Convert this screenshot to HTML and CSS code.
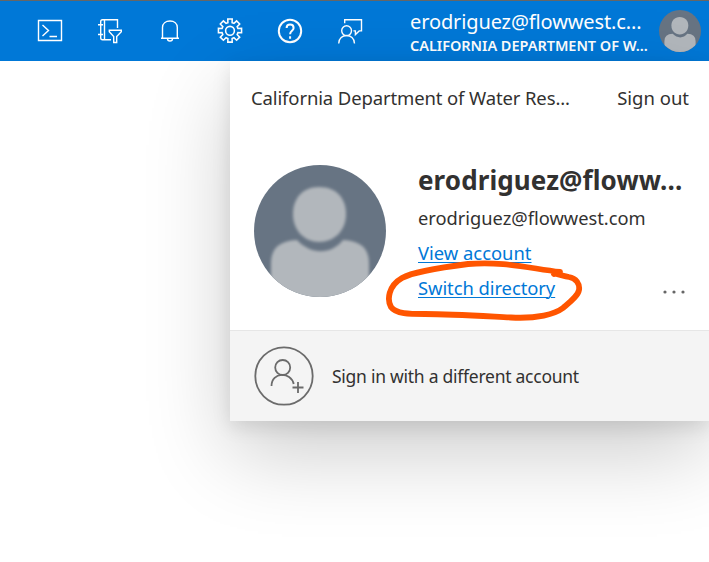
FILE: index.html
```html
<!DOCTYPE html>
<html lang="en">
<head>
<meta charset="utf-8">
<title>Account menu</title>
<link rel="stylesheet" href="styles.css">
</head>
<body>
<header class="topbar">
  <nav class="tools">
    <button class="tool" aria-label="Cloud Shell"><svg viewBox="0 0 26 26"><path d="M1.500 2.500h23v20h-23zM5.500 7l6 5.500-6 5.500M12.500 18.500h7.500"/></svg></button>
    <button class="tool" aria-label="Directories and subscriptions"><svg viewBox="0 0 26 26"><path d="M20.500 10V1.700H5.500q-1.800 0-1.800 2v16q0 2 1.800 2H14M7.500 2v19.500M1 6.700h5M1 16.500h5M12.300 12.300h12v1.500l-4.600 4.700v6h-3v-6l-4.400-4.700z"/></svg></button>
    <button class="tool" aria-label="Notifications"><svg viewBox="0 0 26 26"><path d="M5.500 20V9.500C5.500 5.300 8.800 3 13 3s7.300 2.300 7.300 6.500V20M4 20.300h18M10.500 20.500c0 3.400 5 3.400 5 0"/></svg></button>
    <button class="tool" aria-label="Settings"><svg viewBox="1.200 0.600 23.600 23.600"><path d="M11.100 4.800 11 1.500h4l-.1 3.300 1.700.7 2.400-2.300 2.800 2.800-2.300 2.400.7 1.700 3.300-.1v4l-3.300-.1-.7 1.700 2.300 2.400-2.800 2.800-2.400-2.300-1.700.7.1 3.300h-4l.1-3.300-1.700-.7L7 20.800 4.200 18l2.300-2.400-.7-1.700-3.300.1v-4l3.300.1.7-1.700L4.200 6 7 3.200l2.400 2.300z"/><circle cx="13" cy="12.200" r="4"/></svg></button>
    <button class="tool bold" aria-label="Help"><svg viewBox="0 0 26 26"><circle cx="13" cy="13" r="11.200"/><path d="M9.600 10c0-4.600 7-4.600 7 0 0 2.900-3.500 2.900-3.500 6.300M13.100 18.300v2.500"/></svg></button>
    <button class="tool" aria-label="Feedback"><svg viewBox="0 0 26 26"><path d="M7.700 5.300V1.700h16.800v11.200h-2.300l-3.800 3.600v-3.600h-2M1.700 25.500c0-10.700 15.800-10.700 15.800 0"/><circle cx="9.600" cy="12.700" r="4.900"/></svg></button>
  </nav>
  <div class="identity">
    <div class="identity-mail"><span>erodriguez@flowwest.c...</span></div>
    <div class="identity-org"><span>CALIFORNIA DEPARTMENT OF W...</span></div>
  </div>
  <svg class="avatar-small" viewBox="0 0 132 132"><use href="#person"/></svg>
</header>
<main class="panel">
  <div class="panel-head">
    <span class="org">California Department of Water Res...</span>
    <span class="signout">Sign out</span>
  </div>
  <section class="account">
    <svg class="avatar" viewBox="0 0 132 132">
      <defs>
        <clipPath id="disc"><circle cx="66" cy="66" r="66"/></clipPath>
        <filter id="soft"><feGaussianBlur stdDeviation="1.400"/></filter>
        <g id="person" clip-path="url(#disc)">
          <path fill="#677483" d="M0 0h132v132H0z"/>
          <g fill="#b2b7bc" filter="url(#soft)">
            <path d="M65 22C49 22 39 33 39 49C39 66 51 77 65 77C80 77 92 66 92 49C92 33 82 22 65 22Z"/>
            <path d="M17 140V98Q17 76 43 75C57 90 77 90 89 75Q115 76 115 98V140Z"/>
          </g>
        </g>
      </defs>
      <use href="#person"/>
    </svg>
    <div class="details">
      <div class="name"><span>erodriguez@floww...</span></div>
      <div class="mail"><span>erodriguez@flowwest.com</span></div>
      <a class="link view">View account</a>
      <a class="link switch">Switch directory</a>
    </div>
    <svg class="more" viewBox="0 0 24 6"><circle cx="3" cy="3" r="1.600"/><circle cx="12" cy="3" r="1.600"/><circle cx="21" cy="3" r="1.600"/></svg>
  </section>
  <footer class="other">
    <svg class="add" viewBox="0 0 60 60"><circle cx="30" cy="30" r="28.700"/><circle cx="28.700" cy="21.500" r="7.500"/><path d="M17.500 40c0-14.500 19.500-14.500 22.200-2M44 36v11M38.500 41.500h11"/></svg>
    <span class="different">Sign in with a different account</span>
  </footer>
  <svg class="marker" viewBox="380 250 210 80"><path d="M560 272C528 268 502 261 468 264C436 268 411 273 402 278C388 286 387 300 391 307C396 314 409 314 425 314C451 314 482 316 511 317.500C537 319 555 314 563 308C570 302 578 296 579 290C580 284 576 278 569 277C563 276 555 273 554 274"/></svg>
</main>
</body>
</html>
```
FILE: styles.css
```css
* { box-sizing: border-box; }
body {
  margin: 0;
  width: 709px;
  height: 562px;
  overflow: hidden;
  background: #fff;
  color: #323130;
  font-family: "Noto Sans", "Open Sans", sans-serif;
}
.topbar {
  display: flex;
  height: 61px;
  border-top: 1px solid #666;
  background: #0078d7;
  color: #fff;
}
.tools { display: flex; width: 410px; padding-left: 20px; }
.tool {
  display: grid;
  place-items: center;
  width: 60px;
  height: 60px;
  padding: 0;
  border: 0;
  background: none;
}
.tool svg { width: 26px; height: 26px; fill: none; stroke: #fff; stroke-width: 1.400; }
.tool.bold svg { stroke-width: 2; }
.identity { width: 249px; padding-top: 7px; white-space: nowrap; }
.identity-mail { height: 27px; font-size: 20px; line-height: 27px; letter-spacing: -.12px; }
.identity-org { height: 20px; font-size: 14.500px; font-weight: 600; line-height: 20px; letter-spacing: -.03px; }
.avatar-small { width: 42px; height: 42px; margin-top: 9px; }
.panel {
  position: relative;
  width: 479px;
  height: 360px;
  margin-left: 230px;
  background: #fff;
  box-shadow: 0 32px 80px rgba(0, 0, 0, .2), 0 6px 18px rgba(0, 0, 0, .1);
  white-space: nowrap;
}
.panel-head {
  display: flex;
  justify-content: space-between;
  height: 104px;
  padding: 24px 20px 0 21px;
  font-size: 18.500px;
  line-height: 26px;
}
.org { letter-spacing: -.13px; }
.signout { letter-spacing: 0; }
.account { display: flex; height: 165px; padding-left: 24px; }
.avatar { width: 132px; height: 132px; }
.details { display: flex; flex-direction: column; align-items: flex-start; width: 244px; margin-left: 32px; }
.name { height: 35px; font-size: 26px; font-weight: 700; line-height: 30px; letter-spacing: .1px; }
.mail { height: 35px; font-size: 18.300px; line-height: 35px; }
.link { height: 35px; color: #0078d7; font-size: 18.400px; line-height: 35px; text-decoration: underline; text-underline-offset: 2px; text-decoration-thickness: 1px; }
.switch { letter-spacing: -.06px; }
.more { width: 24px; height: 6px; margin-top: 124px; fill: #666; }
.other {
  display: flex;
  align-items: center;
  height: 91px;
  padding-left: 24px;
  border-top: 1px solid #e6e6e6;
  background: #f4f4f4;
}
.add { width: 60px; height: 60px; fill: none; stroke: #6b6b6b; stroke-width: 1.800; }
.different { margin-left: 18px; font-size: 17.500px; letter-spacing: -.26px; }
.marker {
  position: absolute;
  left: 150px;
  top: 189px;
  width: 210px;
  height: 80px;
  fill: none;
  stroke: #ff5500;
  stroke-width: 5.800;
  stroke-linecap: round;
  stroke-linejoin: round;
}
```
